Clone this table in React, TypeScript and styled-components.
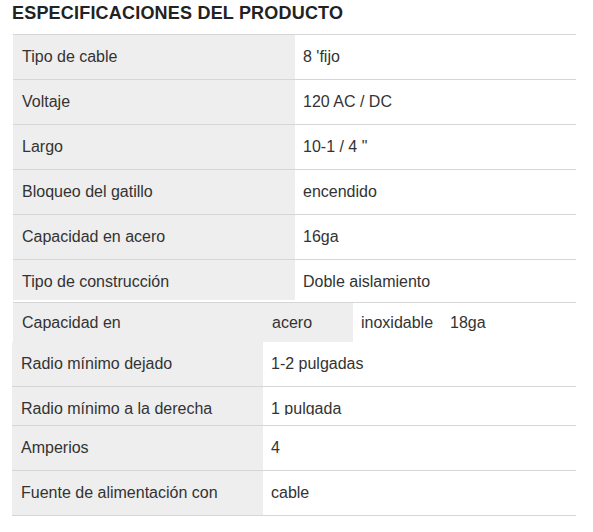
import styled, { createGlobalStyle } from "styled-components";

const GlobalStyle = createGlobalStyle`
  body {
    margin: 0;
    background: #fff;
    font-family: "Liberation Sans", Arial, sans-serif;
    color: #333;
  }
`;

const specs = [
  ["Tipo de cable", "8 'fijo"],
  ["Voltaje", "120 AC / DC"],
  ["Largo", "10-1 / 4 \""],
  ["Bloqueo del gatillo", "encendido"],
  ["Capacidad en acero", "16ga"],
  ["Tipo de construcción", "Doble aislamiento"],
];

const extra = [
  ["Radio mínimo dejado", "1-2 pulgadas", false],
  ["Radio mínimo a la derecha", "1 pulgada", true],
  ["Amperios", "4", false],
  ["Fuente de alimentación con", "cable", false],
] as const;

export default function App() {
  return (
    <>
      <GlobalStyle />
      <Page>
        <Title>ESPECIFICACIONES DEL PRODUCTO</Title>

        {/* main table */}
        <SpecTable>
          {specs.map(([label, value], i) => (
            <Row key={label} last={i === specs.length - 1}>
              <Label>{label}</Label>
              <Value>{value}</Value>
            </Row>
          ))}
        </SpecTable>

        {/* broken row */}
        <SplitRow>
          <Label>Capacidad en</Label>
          <Label>acero</Label>
          <Value>inoxidable</Value>
          <Value>18ga</Value>
        </SplitRow>

        {/* lower table */}
        <LowerTable>
          {extra.map(([label, value, cut]) => (
            <LowerRow key={label} short={cut}>
              <Label>{label}</Label>
              <Value>
                <Clip cut={cut}>{value}</Clip>
              </Value>
            </LowerRow>
          ))}
        </LowerTable>
      </Page>
    </>
  );
}

const Page = styled.div`
  width: 593px;
  height: 532px;
  overflow: hidden;
  padding: 4px 17px 0 12px;
  box-sizing: border-box;
`;

const Title = styled.h2`
  margin: 0;
  height: 30px;
  font-family: "Liberation Sans", Arial, sans-serif;
  font-size: 18px;
  font-weight: 700;
  letter-spacing: 0.2px;
  color: #222;
  line-height: 19px;
`;

const SpecTable = styled.div`
  margin-left: 1px;
  border-top: 1px solid #d6d6d6;
`;

interface RowProps {
  last?: boolean;
}
const Row = styled.div<RowProps>`
  display: grid;
  grid-template-columns: 282px 1fr;
  height: ${(p) => (p.last ? "40px" : "44px")};
  border-bottom: ${(p) => (p.last ? "none" : "1px solid #d6d6d6")};
  overflow: hidden;
`;

const Label = styled.div`
  background: #eeeeee;
  padding: 0 9px;
  font-size: 16px;
  line-height: 44px;
  white-space: nowrap;
`;

const Value = styled.div`
  background: #fff;
  padding: 0 8px;
  font-size: 16px;
  line-height: 44px;
  white-space: nowrap;
`;

const SplitRow = styled.div`
  margin-top: 2px;
  margin-left: 1px;
  display: grid;
  grid-template-columns: 250px 90px 89px 1fr;
  height: 38px;
  border-top: 1px solid #d6d6d6;
  border-bottom: 1px solid #d6d6d6;
  & > div {
    line-height: 39px;
  }
`;

const LowerTable = styled.div``;

interface LowerRowProps {
  short?: boolean;
}
const LowerRow = styled.div<LowerRowProps>`
  display: grid;
  grid-template-columns: 251px 1fr;
  height: ${(p) => (p.short ? "38px" : "44px")};
  border-bottom: 1px solid #d6d6d6;
  overflow: hidden;
`;

interface ClipProps {
  cut?: boolean;
}
// the value in the short row is cut just under its baseline
const Clip = styled.div<ClipProps>`
  height: ${(p) => (p.cut ? "28px" : "44px")};
  overflow: hidden;
`;
